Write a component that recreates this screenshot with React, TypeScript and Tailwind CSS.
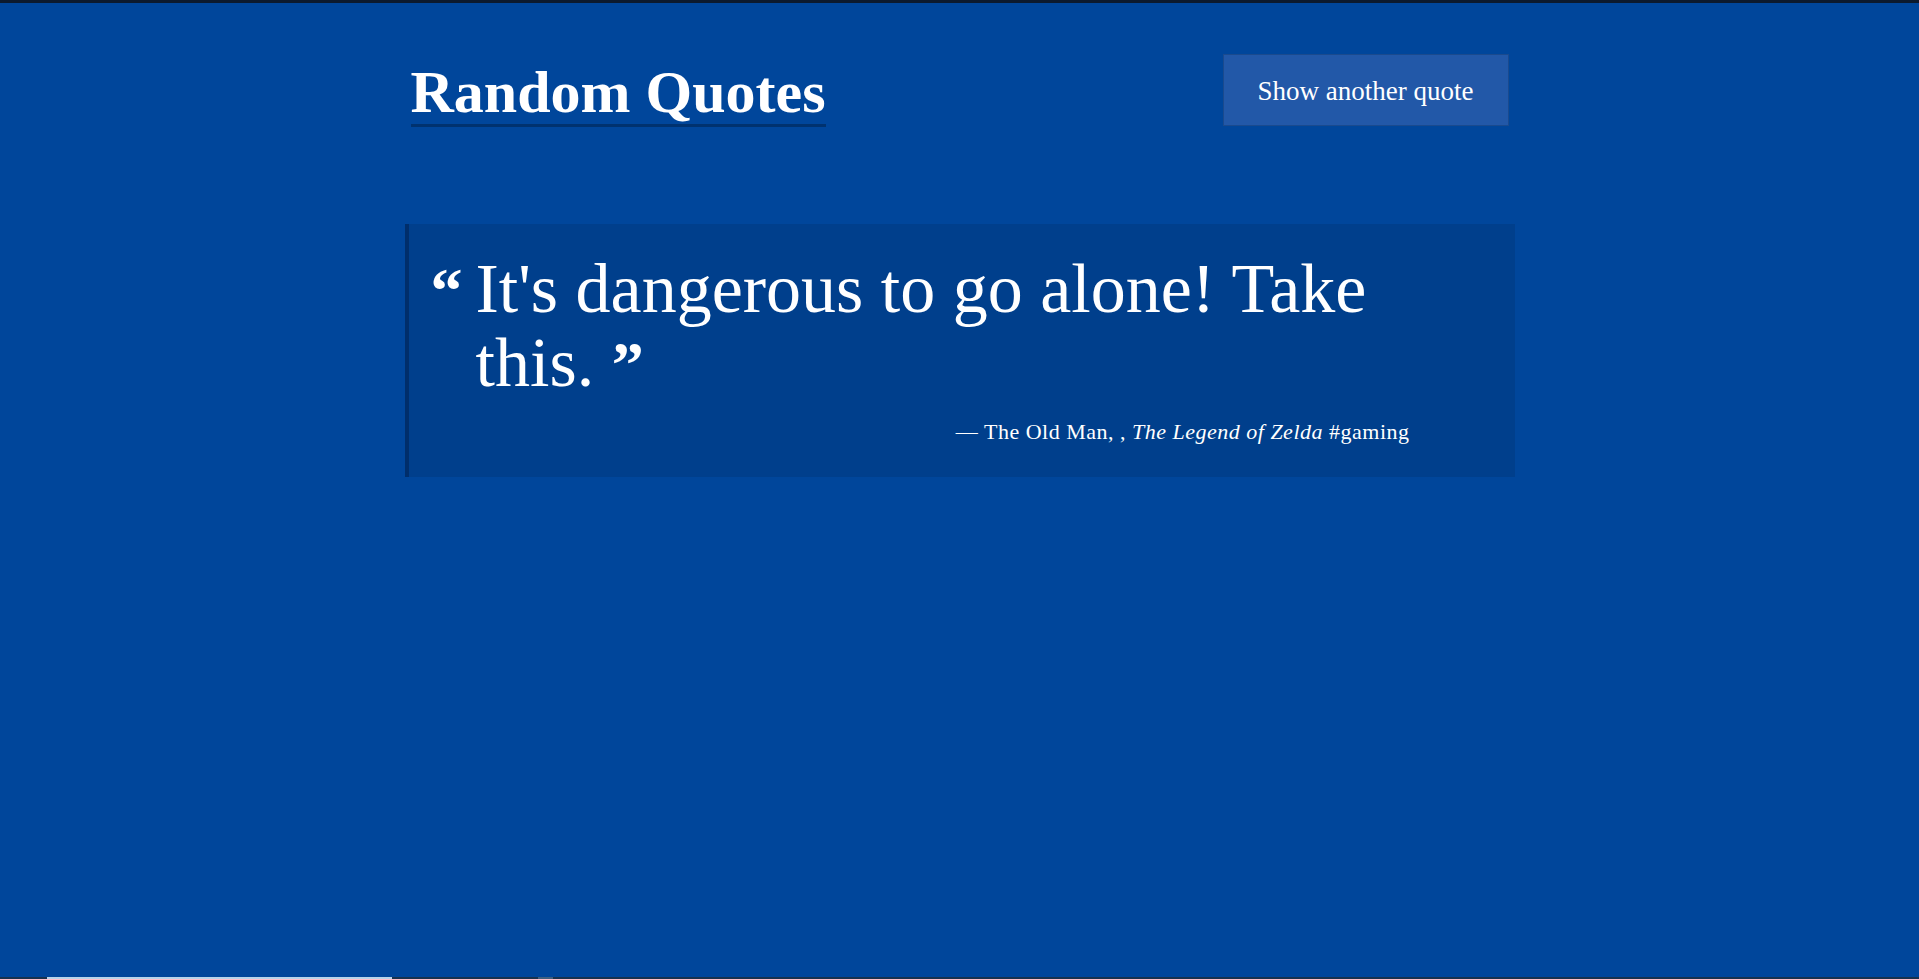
import { useState } from 'react';

const quotes = [
  {
    text: "It's dangerous to go alone! Take this.",
    author: 'The Old Man',
    role: '',
    source: 'The Legend of Zelda',
    tag: '#gaming',
  },
];

export default function App() {
  const [index, setIndex] = useState(0);
  const quote = quotes[index];

  return (
    <div className="h-[979px] flex flex-col bg-[#00469b] font-['Liberation_Serif',serif] text-white overflow-hidden">
      {/* top strip */}
      <div className="h-[3px] bg-[#0c1a2e]" />

      <main className="flex-1">
        <div className="w-[1110px] mx-auto">
          {/* Header */}
          <header className="flex items-start justify-between px-[6px] pt-[51px]">
            <h1 className="mt-[8px] text-[60px] leading-[60px] font-bold pb-[2px] border-b-[3px] border-[#00326f]">
              Random Quotes
            </h1>
            <button
              onClick={() => setIndex((index + 1) % quotes.length)}
              className="w-[286px] h-[72px] pt-[3px] bg-[#2258a8] border border-[#1a4a8e] text-[27px] text-white"
            >
              Show another quote
            </button>
          </header>

          {/* Quote */}
          <blockquote className="mt-[97px] bg-[#003f8c] border-l-4 border-[#002e6b] pl-[22px] pr-[105px] pt-[28px] pb-[31px]">
            <div className="flex items-baseline">
              <span className="w-[45px] shrink-0 text-[64px] leading-[74px] font-bold">“</span>
              <p className="text-[70px] leading-[74px]">
                {quote.text}{' '}
                <span className="font-bold text-[64px] leading-none">”</span>
              </p>
            </div>
            <footer className="mt-[18px] text-right text-[22px] leading-[28px] tracking-[0.5px]">
              — {quote.author}, {quote.role}, <cite className="italic">{quote.source}</cite> {quote.tag}
            </footer>
          </blockquote>
        </div>
      </main>

      {/* bottom strip */}
      <div className="h-[2px] flex bg-[#16324f]">
        <div className="ml-[47px] w-[345px] bg-[#b8d4ea]" />
        <div className="ml-[146px] w-[15px] bg-[#3d5f80]" />
      </div>
    </div>
  );
}
